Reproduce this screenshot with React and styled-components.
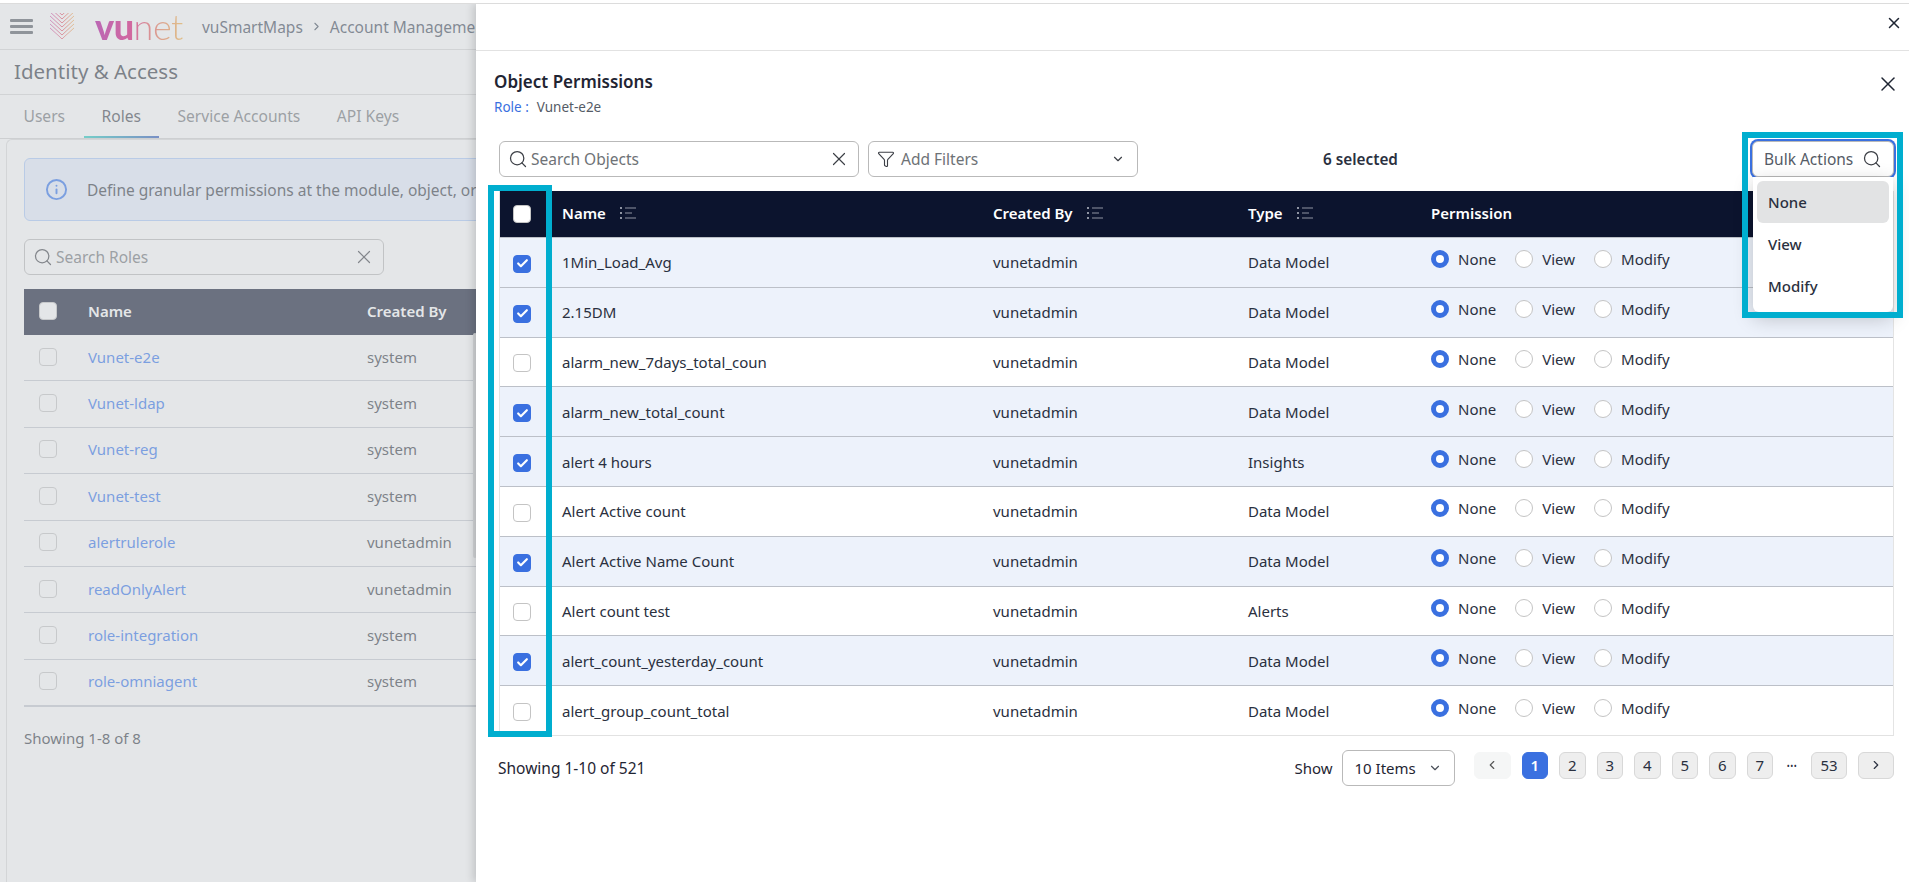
import React from 'react'
import styled, { createGlobalStyle } from 'styled-components'
import { Search, X, Filter, ChevronDown, ChevronLeft, ChevronRight, Info, Check } from 'lucide-react'

const FONT = `'Noto Sans', Roboto, sans-serif`

const GlobalStyle = createGlobalStyle`
  html, body { margin: 0; padding: 0; height: 100%; overflow: hidden; background: #fff; }
  * { box-sizing: border-box; }
  body { font-family: ${FONT}; font-size: 15px; color: #1f2533; }
`

const TopStrip = styled.div`
  height: 4px;
  background: #fff;
  border-bottom: 1px solid #dcdcdc;
`

const Stage = styled.div`
  position: relative;
  height: 878px;
  overflow: hidden;
`

const Page = styled.div`
  height: 100%;
  background: #fff;
`

const Header = styled.header`
  display: flex;
  align-items: center;
  height: 46px;
  padding-left: 10px;
  border-bottom: 1px solid #d8d8d8;
`

const Burger = styled.div`
  display: flex;
  flex-direction: column;
  gap: 3.5px;
  width: 23px;
  span {
    display: block;
    height: 2.5px;
    background: #555a62;
    border-radius: 1px;
  }
`

const LogoMark = styled.svg`
  margin-left: 17px;
  flex-shrink: 0;
`

const Wordmark = styled.div`
  margin-left: 21px;
  margin-top: -2px;
  font-family: Lato, sans-serif;
  font-size: 36px;
  line-height: 40px;
  letter-spacing: -0.5px;
  background: linear-gradient(90deg, #ac0096 0%, #d8006f 40%, #e8505a 60%, #f0804a 78%, #f5b040 100%);
  -webkit-background-clip: text;
  background-clip: text;
  color: transparent;
  b { font-weight: 900; }
  span { font-weight: 300; }
`

const Crumbs = styled.div`
  display: flex;
  align-items: center;
  gap: 7px;
  margin-left: 19px;
  font-size: 15.5px;
  color: #3a4656;
  white-space: nowrap;
`

const PageTitle = styled.div`
  height: 45px;
  padding: 0 0 2px 14px;
  display: flex;
  align-items: center;
  font-size: 20.5px;
  color: #2f3540;
  border-bottom: 1px solid #d8d8d8;
`

const Tabs = styled.div`
  display: flex;
  gap: 1.5px;
  height: 44px;
  padding-left: 6px;
  border-bottom: 1px solid #d0d0d0;
`

const Tab = styled.div`
  display: flex;
  align-items: center;
  padding: 0 17.5px;
  font-size: 15.6px;
  color: ${p => (p.$active ? '#3a3f4a' : '#6e7276')};
  border-bottom: 2px solid transparent;
  border-image: ${p => (p.$active ? 'linear-gradient(90deg, #20d0c0, #2850b8) 1' : 'none')};
`

const Card = styled.div`
  margin: 0 0 0 6px;
  padding: 18px 17px 0;
  height: 760px;
  border-left: 1px solid #dcdcdc;
  border-top: 1px solid #dcdcdc;
  border-top-left-radius: 6px;
`

const Banner = styled.div`
  display: flex;
  align-items: center;
  gap: 19px;
  height: 63px;
  padding-left: 20px;
  background: #e6eeff;
  border: 1px solid #a8c8fa;
  border-radius: 6px;
  font-size: 15.5px;
  color: #30363f;
  white-space: nowrap;
  overflow: hidden;
  svg { color: #2c70ee; flex-shrink: 0; }
`

const SearchBox = styled.div`
  display: flex;
  align-items: center;
  gap: 3px;
  width: ${p => p.$w}px;
  height: 36px;
  padding: 0 8px;
  border: 1px solid #b9b9b9;
  border-radius: 6px;
  background: #fff;
  color: #6e7276;
  font-size: 15.5px;
  span { flex: 1; }
  svg { flex-shrink: 0; color: #3c3f46; }
`

const RoleSearch = styled(SearchBox)`
  margin-top: 18px;
`

const RoleTable = styled.div`
  margin-top: 14px;
  width: 452px;
  border-bottom: 1px solid #c4c8d0;
`

const RoleRow = styled.div`
  display: grid;
  grid-template-columns: 64px 279px 1fr;
  align-items: center;
  height: ${p => (p.$head ? 46 : 46.4)}px;
  padding-bottom: 2px;
  background: ${p => (p.$head ? '#0c142e' : 'transparent')};
  color: ${p => (p.$head ? '#fff' : '#30363f')};
  font-weight: ${p => (p.$head ? 600 : 400)};
  border-bottom: ${p => (p.$head ? 'none' : '1px solid #c4c8d0')};
  white-space: nowrap;
`

const RoleLink = styled.span`
  color: #2c70ee;
`

const Scrollbar = styled.div`
  position: absolute;
  left: 473px;
  top: 329px;
  width: 4px;
  height: 225px;
  border-radius: 2px;
  background: #d8d8d8;
`

const PageCount = styled.div`
  margin-top: 21px;
  color: #30363f;
`

const Overlay = styled.div`
  position: absolute;
  inset: 0;
  background: rgba(202, 206, 210, 0.5);
`

const Drawer = styled.aside`
  position: absolute;
  top: 0;
  right: 0;
  bottom: 0;
  width: 1433px;
  background: #fff;
  box-shadow: -3px 0 8px rgba(0, 0, 0, 0.15);
  display: flex;
  flex-direction: column;
`

const DrawerBar = styled.div`
  display: flex;
  align-items: center;
  justify-content: flex-end;
  height: 47px;
  padding: 0 6px 8px 0;
  border-bottom: 1px solid #e2e2e2;
  svg { color: #1f2533; }
`

const DrawerBody = styled.div`
  padding: 0 15px 0 23px;
  position: relative;
`

const TitleRow = styled.div`
  display: flex;
  align-items: flex-start;
  justify-content: space-between;
  padding-top: 19px;
  margin: 0 -6px 0 -5px;
  height: 90px;
  svg { color: #1f2533; margin-top: 2px; }
`

const Title = styled.div`
  font-size: 17px;
  font-weight: 600;
  line-height: 23px;
  color: #1f2533;
`

const RoleLine = styled.div`
  margin-top: 5px;
  font-size: 13.5px;
  line-height: 18px;
  color: #555b66;
  span { color: #3a70e0; margin-right: 8px; }
`

const Toolbar = styled.div`
  display: flex;
  align-items: center;
  gap: 9px;
  height: 36px;
`

const FilterBox = styled(SearchBox)`
  gap: 6px;
  padding-right: 12px;
`

const Selected = styled.div`
  margin-left: 176px;
  font-size: 15.3px;
  font-weight: 600;
  color: #2a3040;
`

const BulkWrap = styled.div`
  position: relative;
  margin-left: auto;
`

const BulkInput = styled(SearchBox)`
  padding: 0 11px 0 11px;
  box-shadow: 0 0 0 2px #3a70e0;
  border-color: #b9b9b9;
  color: #555b66;
`

const BulkMenu = styled.div`
  position: absolute;
  top: 36px;
  left: 1px;
  right: 1px;
  z-index: 3;
  height: 135px;
  padding: 4px;
  background: #fff;
  border-radius: 0 0 6px 6px;
  box-shadow: 0 6px 20px rgba(0, 0, 0, 0.22);
`

const BulkItem = styled.div`
  display: flex;
  align-items: center;
  height: 42px;
  padding-left: 11px;
  border-radius: 6px;
  background: ${p => (p.$active ? '#e2e3e4' : 'transparent')};
  font-weight: 500;
  color: #2a3040;
`

const Table = styled.div`
  margin-top: 14px;
  border-right: 1px solid #e4e4e4;
  border-left: 1px solid #e4e4e4;
  border-bottom: 1px solid #e2e2e2;
`

const columns = '62px 431px 255px 183px 1fr'

const BoxCell = styled.div`
  display: flex;
  justify-content: center;
  padding-right: ${p => p.$pr ?? 18}px;
`

const HeadRow = styled.div`
  display: grid;
  grid-template-columns: ${columns};
  align-items: center;
  height: 46px;
  padding-bottom: 1px;
  background: #0c142e;
  color: #fff;
  font-weight: 600;
`

const HeadCell = styled.div`
  display: flex;
  align-items: center;
  gap: 14px;
  padding-bottom: 2px;
`

const Row = styled.div`
  display: grid;
  grid-template-columns: ${columns};
  align-items: center;
  height: 49.8px;
  background: ${p => (p.$on ? '#edf2fb' : '#fff')};
  border-top: 1px solid #bcc0c8;
  color: #2a3040;
  &:first-of-type { border-top: none; }
  ${BoxCell} { padding-top: 3px; }
`

const Box = styled.div`
  display: flex;
  align-items: center;
  justify-content: center;
  width: 18px;
  height: 18px;
  border-radius: 4px;
  border: 1px solid ${p => (p.$on ? '#3a70e0' : '#c4c4c4')};
  background: ${p => (p.$on ? '#3a70e0' : '#fff')};
  color: #fff;
`

const Radios = styled.div`
  display: flex;
  align-items: center;
  padding-bottom: 6px;
`

const RadioItem = styled.div`
  display: flex;
  align-items: center;
  gap: 9px;
  margin-right: 19px;
`

const RadioDot = styled.span`
  display: block;
  width: 18px;
  height: 18px;
  border-radius: 50%;
  background: #fff;
  border: ${p => (p.$on ? '5px solid #3a70e0' : '1px solid #c4c4c4')};
`

const Footer = styled.div`
  display: flex;
  align-items: center;
  height: 36px;
  margin: 14px 0 0 -1px;
`

const ShowingText = styled.span`
  font-size: 15.5px;
`

const Show = styled.div`
  margin-left: auto;
  margin-right: 9px;
`

const PageSelect = styled.div`
  display: flex;
  align-items: center;
  justify-content: space-between;
  width: 113px;
  height: 36px;
  padding: 0 12px;
  border: 1px solid #b9b9b9;
  border-radius: 6px;
  margin-right: 19px;
  svg { color: #4a4f58; }
`

const Pager = styled.div`
  display: flex;
  align-items: center;
  gap: 11px;
  margin-top: -5px;
`

const PageBtn = styled.div`
  display: flex;
  align-items: center;
  justify-content: center;
  min-width: ${p => p.$w || 26.5}px;
  height: 27px;
  border-radius: 6px;
  font-weight: ${p => (p.$active ? 600 : 400)};
  background: ${p => (p.$active ? '#3a70e0' : p.$off ? '#f5f6f6' : '#eeeeee')};
  color: ${p => (p.$active ? '#fff' : p.$off ? '#555' : '#2a3040')};
  border: 1px solid ${p => (p.$active ? '#3a70e0' : p.$off ? '#f5f6f6' : '#d8d8d8')};
`

const Dots = styled.div`
  width: 16px;
  text-align: center;
  font-size: 8px;
  letter-spacing: 0.5px;
  white-space: nowrap;
  color: #2a3040;
`

const Highlight = styled.div`
  position: absolute;
  z-index: 4;
  left: ${p => p.$x}px;
  top: ${p => p.$y}px;
  width: ${p => p.$w}px;
  height: ${p => p.$h}px;
  border: 6px solid #00aecf;
  pointer-events: none;
`

const SortIcon = () => (
  <svg width="16" height="12" viewBox="0 0 16 12" fill="none" stroke="#8f94a2" strokeWidth="1.2">
    <path d="M5 1h11M5 6h7M5 11h11" />
    <path d="M0 1h2M0 6h2M0 11h2" strokeWidth="2" />
  </svg>
)

const objects = [
  ['1Min_Load_Avg', 'Data Model', true],
  ['2.15DM', 'Data Model', true],
  ['alarm_new_7days_total_coun', 'Data Model', false],
  ['alarm_new_total_count', 'Data Model', true],
  ['alert 4 hours', 'Insights', true],
  ['Alert Active count', 'Data Model', false],
  ['Alert Active Name Count', 'Data Model', true],
  ['Alert count test', 'Alerts', false],
  ['alert_count_yesterday_count', 'Data Model', true],
  ['alert_group_count_total', 'Data Model', false],
]

const roles = [
  ['Vunet-e2e', 'system'],
  ['Vunet-ldap', 'system'],
  ['Vunet-reg', 'system'],
  ['Vunet-test', 'system'],
  ['alertrulerole', 'vunetadmin'],
  ['readOnlyAlert', 'vunetadmin'],
  ['role-integration', 'system'],
  ['role-omniagent', 'system'],
]

const App = () => {
  return (
    <>
      <GlobalStyle />
      <TopStrip />
      <Stage>
        <Page>
          <Header>
            <Burger><span /><span /><span /></Burger>
            <LogoMark width="24" height="27" viewBox="0 0 24 27" fill="none" strokeWidth="0.9">
              <defs>
                <linearGradient id="mark" gradientUnits="userSpaceOnUse" x1="0" x2="24" y1="0" y2="0">
                  <stop offset="0" stopColor="#d040a8" />
                  <stop offset="0.5" stopColor="#e8405a" />
                  <stop offset="1" stopColor="#f5a840" />
                </linearGradient>
                <clipPath id="shield">
                  <path d="M0 0H24V16L12 26.5L0 16Z" />
                </clipPath>
              </defs>
              <g clipPath="url(#shield)">
                {[-10, -6, -2, 2, 6, 10, 14].map(d => (
                  <path key={d} d={`M-1 ${d}L12 ${d + 12}L25 ${d}`} stroke="url(#mark)" />
                ))}
              </g>
            </LogoMark>
            <Wordmark><b>vu</b><span>net</span></Wordmark>
            <Crumbs>
              <span>vuSmartMaps</span>
              <ChevronRight size={13} />
              <span>Account Management</span>
            </Crumbs>
          </Header>
          <PageTitle>Identity &amp; Access</PageTitle>
          <Tabs>
            <Tab>Users</Tab>
            <Tab $active>Roles</Tab>
            <Tab>Service Accounts</Tab>
            <Tab>API Keys</Tab>
          </Tabs>
          <Card>
            <Banner>
              <Info size={23} />
              Define granular permissions at the module, object, or data level for this role.
            </Banner>
            <RoleSearch $w={360}>
              <Search size={20} strokeWidth={1.5} />
              <span>Search Roles</span>
              <X size={22} strokeWidth={1.3} />
            </RoleSearch>
            <RoleTable>
              <RoleRow $head>
                <BoxCell $pr={16}><Box /></BoxCell>
                <span>Name</span>
                <span>Created By</span>
              </RoleRow>
              {roles.map(r => (
                <RoleRow key={r[0]}>
                  <BoxCell $pr={16}><Box /></BoxCell>
                  <RoleLink>{r[0]}</RoleLink>
                  <span>{r[1]}</span>
                </RoleRow>
              ))}
            </RoleTable>
            <PageCount>Showing 1-8 of 8</PageCount>
          </Card>
        </Page>
        <Scrollbar />
        <Overlay />
        <Drawer>
          <DrawerBar><X size={18} /></DrawerBar>
          <DrawerBody>
            <TitleRow>
              <div>
                <Title>Object Permissions</Title>
                <RoleLine><span>Role :</span>Vunet-e2e</RoleLine>
              </div>
              <X size={24} strokeWidth={1.5} />
            </TitleRow>
            <Toolbar>
              <SearchBox $w={360}>
                <Search size={20} strokeWidth={1.5} />
                <span>Search Objects</span>
                <X size={22} strokeWidth={1.3} />
              </SearchBox>
              <FilterBox $w={270}>
                <Filter size={18} strokeWidth={1.5} />
                <span>Add Filters</span>
                <ChevronDown size={14} />
              </FilterBox>
              <Selected>6 selected</Selected>
              <BulkWrap>
                <BulkInput $w={142}>
                  <span>Bulk Actions</span>
                  <Search size={20} strokeWidth={1.5} />
                </BulkInput>
                <BulkMenu>
                  <BulkItem $active>None</BulkItem>
                  <BulkItem>View</BulkItem>
                  <BulkItem>Modify</BulkItem>
                </BulkMenu>
              </BulkWrap>
            </Toolbar>
            <Table>
              <HeadRow>
                <BoxCell><Box /></BoxCell>
                <HeadCell>Name <SortIcon /></HeadCell>
                <HeadCell>Created By <SortIcon /></HeadCell>
                <HeadCell>Type <SortIcon /></HeadCell>
                <HeadCell>Permission</HeadCell>
              </HeadRow>
              {objects.map(o => (
                <Row key={o[0]} $on={o[2]}>
                  <BoxCell>
                    <Box $on={o[2]}>{o[2] && <Check size={13} strokeWidth={4} />}</Box>
                  </BoxCell>
                  <span>{o[0]}</span>
                  <span>vunetadmin</span>
                  <span>{o[1]}</span>
                  <Radios>
                    <RadioItem><RadioDot $on />None</RadioItem>
                    <RadioItem><RadioDot />View</RadioItem>
                    <RadioItem><RadioDot />Modify</RadioItem>
                  </Radios>
                </Row>
              ))}
            </Table>
            <Footer>
              <ShowingText>Showing 1-10 of 521</ShowingText>
              <Show>Show</Show>
              <PageSelect>10 Items <ChevronDown size={14} /></PageSelect>
              <Pager>
                <PageBtn $w={37} $off><ChevronLeft size={14} /></PageBtn>
                <PageBtn $active>1</PageBtn>
                {['2', '3', '4', '5', '6', '7'].map(n => <PageBtn key={n}>{n}</PageBtn>)}
                <Dots>•••</Dots>
                <PageBtn $w={36}>53</PageBtn>
                <PageBtn $w={36}><ChevronRight size={14} /></PageBtn>
              </Pager>
            </Footer>
          </DrawerBody>
        </Drawer>
        <Highlight $x={488} $y={181} $w={64} $h={552} />
        <Highlight $x={1742} $y={128} $w={161} $h={186} />
      </Stage>
    </>
  )
}

export default App
